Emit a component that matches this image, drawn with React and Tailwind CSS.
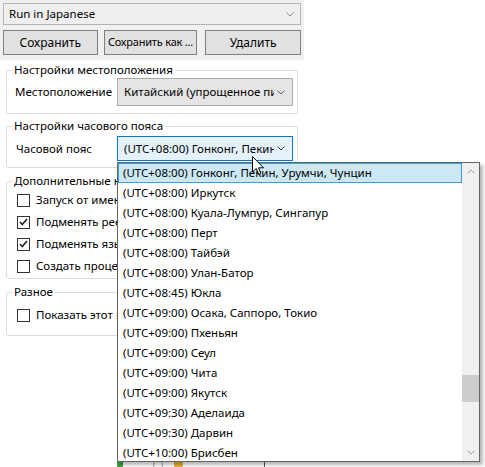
import React from "react";

const zones = [
  "(UTC+08:00) Гонконг, Пекин, Урумчи, Чунцин",
  "(UTC+08:00) Иркутск",
  "(UTC+08:00) Куала-Лумпур, Сингапур",
  "(UTC+08:00) Перт",
  "(UTC+08:00) Тайбэй",
  "(UTC+08:00) Улан-Батор",
  "(UTC+08:45) Юкла",
  "(UTC+09:00) Осака, Саппоро, Токио",
  "(UTC+09:00) Пхеньян",
  "(UTC+09:00) Сеул",
  "(UTC+09:00) Чита",
  "(UTC+09:00) Якутск",
  "(UTC+09:30) Аделаида",
  "(UTC+09:30) Дарвин",
  "(UTC+10:00) Брисбен",
];

const Chevron = ({ up = false, color = "#5f5f5f" }) => (
  <svg width="8" height="5" viewBox="0 0 8 5" className="shrink-0">
    <polyline
      points={up ? "0.5,4.5 4,1 7.5,4.5" : "0.5,0.5 4,4 7.5,0.5"}
      fill="none"
      stroke={color}
      strokeWidth="1"
    />
  </svg>
);

const Check = ({ checked }) => (
  <span className="w-[13px] h-[13px] border border-[#333] bg-white flex items-center justify-center shrink-0">
    {checked && (
      <svg width="9" height="8" viewBox="0 0 9 8">
        <polyline points="1,4 3.3,6.5 8,1" fill="none" stroke="#222" strokeWidth="1.6" />
      </svg>
    )}
  </span>
);

const CheckRow = ({ label, checked }) => (
  <div className="h-[22px] flex items-center pl-[10px] gap-[6px] whitespace-nowrap">
    <Check checked={checked} />
    <span>{label}</span>
  </div>
);

const Group = ({ title, className, children }) => (
  <fieldset className={`border border-[#dcdcdc] rounded-[3px] ${className}`}>
    <legend className="ml-[5px] px-[2px] leading-[16px] whitespace-nowrap">{title}</legend>
    {children}
  </fieldset>
);

export default function App() {
  return (
    <div className="relative w-[485px] h-[467px] bg-white overflow-hidden font-['Noto_Sans',sans-serif] text-[11.5px] text-black">
      {/* top toolbar */}
      <div className="w-[304px] bg-[#f0f0f0] px-[3px] pt-[3px] pb-[5px] flex flex-col gap-[5px]">
        <div className="h-[22px] border border-[#b4b4b4] bg-[#efefef] flex items-center justify-between pl-[5px] pr-[6px]">
          <span>Run in Japanese</span>
          <Chevron color="#8a8a8a" />
        </div>
        <div className="flex h-[25px] text-[12px]">
          <button className="w-[95px] border border-[#7f7f7f] bg-[#e1e1e1]">Сохранить</button>
          <button className="w-[94px] ml-[6px] border border-[#7f7f7f] bg-[#e1e1e1] whitespace-nowrap overflow-hidden text-[11px] tracking-[-0.2px]">
            Сохранить как ...
          </button>
          <button className="w-[96px] ml-[8px] border border-[#7f7f7f] bg-[#e1e1e1]">Удалить</button>
        </div>
      </div>

      {/* settings */}
      <div className="w-[304px] px-[6px] flex flex-col">
        <Group title="Настройки местоположения" className="mt-[2px] h-[52px]">
          <div className="flex items-center pl-[8px]">
            <span className="w-[102px] whitespace-nowrap">Местоположение</span>
            <div className="w-[176px] h-[28px] border border-[#adadad] bg-[#e5e5e5] flex items-center pl-[6px] pr-[7px]">
              <span className="w-[150px] overflow-hidden whitespace-nowrap">Китайский (упрощенное письмо)</span>
              <span className="ml-auto"><Chevron /></span>
            </div>
          </div>
        </Group>

        <Group title="Настройки часового пояса" className="mt-[4px] h-[50px]">
          <div className="flex items-center pl-[9px] mt-[2px]">
            <span className="w-[101px] whitespace-nowrap">Часовой пояс</span>
            <div className="w-[176px] h-[25px] border border-[#0078d7] bg-[#e5f1fb] flex items-center pl-[6px] pr-[7px]">
              <span className="w-[150px] overflow-hidden whitespace-nowrap">(UTC+08:00) Гонконг, Пекин, Урумчи</span>
              <span className="ml-auto"><Chevron color="#333" /></span>
            </div>
          </div>
        </Group>

        <Group title="Дополнительные настройки" className="mt-[5px] h-[106px]">
          <CheckRow label="Запуск от имени администратора" />
          <CheckRow label="Подменять реестр" checked />
          <CheckRow label="Подменять язык" checked />
          <CheckRow label="Создать процесс" />
        </Group>

        <Group title="Разное" className="mt-[5px] h-[52px]">
          <div className="mt-[4px]">
            <CheckRow label="Показать этот профиль" />
          </div>
        </Group>
      </div>

      {/* bits of the window below the popup */}
      <span className="absolute left-[117px] top-[461px] w-[6px] h-[6px] bg-[#3c9a3c] rounded-[1px]" />
      <span className="absolute left-[153px] top-[460px] w-[10px] h-[10px] border border-[#9a9a9a] rounded-full" />
      <span className="absolute left-[174px] top-[461px] w-[9px] h-[6px] bg-[#e2b33a] rounded-[1px]" />
      <span className="absolute left-[264px] top-[461px] w-[1px] h-[6px] bg-[#555]" />

      {/* dropdown list */}
      <div className="absolute left-[117px] top-[162px] w-[363px] h-[300px] border border-[#646464] bg-white flex shadow-[3px_3px_3px_rgba(0,0,0,0.28)]">
        <div className="flex-1 overflow-hidden">
          {zones.map((z, i) => (
            <div
              key={z}
              className={`h-[20px] flex items-center pl-[4px] whitespace-nowrap border ${
                i === 0 ? "bg-[#cce8f7] border-[#3a9fdc]" : "border-transparent"
              }`}
            >
              {z}
            </div>
          ))}
        </div>
        <div className="w-[17px] bg-[#f0f0f0] flex flex-col items-center">
          <div className="h-[17px] flex items-center justify-center">
            <Chevron up color="#a0a0a0" />
          </div>
          <div className="w-full h-[27px] bg-[#cdcdcd] mt-[195px]" />
          <div className="mt-auto h-[17px] flex items-center justify-center">
            <Chevron color="#a0a0a0" />
          </div>
        </div>
      </div>

      {/* mouse pointer */}
      <svg className="absolute left-[252px] top-[156px]" width="13" height="20" viewBox="0 0 13 20">
        <path
          d="M0.5,0.5 L0.5,16 L4.2,12.5 L6.8,18.5 L9,17.6 L6.5,11.8 L11.5,11.8 Z"
          fill="#fff"
          stroke="#000"
          strokeWidth="1"
          strokeLinejoin="miter"
        />
      </svg>
    </div>
  );
}
